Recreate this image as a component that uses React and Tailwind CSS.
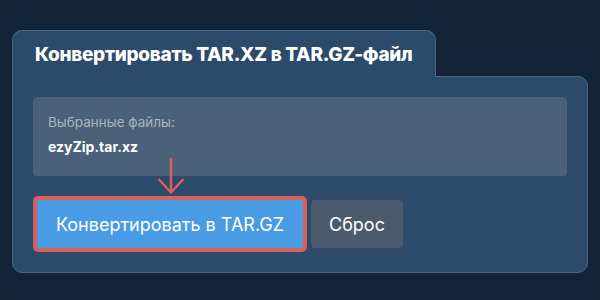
import React from "react";

export default function App() {
  return (
    <div
      className="w-[600px] h-[300px] bg-[#12233a] pt-[30px] px-[12px]"
      style={{ fontFamily: "Inter, 'Noto Sans', sans-serif" }}
    >
      <div className="relative z-10 -mb-px w-[424px] h-[47px] bg-[#2c4a6a] border border-b-0 border-[#506784] rounded-t-[10px] pl-[22px] pt-[10px]">
        <h1 className="text-[19px] leading-[28px] font-extrabold text-white tracking-[-0.3px]">
          Конвертировать TAR.XZ в TAR.GZ-файл
        </h1>
      </div>
      <div className="relative w-[576px] h-[197px] bg-[#2c4a6a] border border-[#506784] rounded-b-[10px] rounded-tr-[10px] p-5">
        <div className="h-[79px] bg-[#4b6079] rounded-[4px] pl-[15px] pt-[16px]">
          <div className="text-[13.5px] leading-[18px] text-[#aab4c1]">Выбранные файлы:</div>
          <div className="mt-[6px] text-[14px] leading-[20px] font-bold text-white">ezyZip.tar.xz</div>
        </div>
        <svg
          className="absolute left-[144px] top-[81px]"
          width="28"
          height="37"
          viewBox="0 0 28 37"
          fill="none"
        >
          <line x1="14" y1="0" x2="14" y2="35" stroke="#d9605a" strokeWidth="2.5" />
          <polyline points="1.5,21 14,34.5 26.5,21" stroke="#d9605a" strokeWidth="2.5" fill="none" />
        </svg>
        <div className="mt-5 flex items-center gap-1">
          <div className="bg-[#d9605a] p-1 rounded-[5px]">
            <button className="h-[48px] w-[266px] bg-[#4a9be5] rounded-[2px] text-[18px] text-white">
              Конвертировать в TAR.GZ
            </button>
          </div>
          <button className="h-[48px] w-[92px] bg-[#4b5b6c] rounded-[4px] text-[18px] text-white">
            Сброс
          </button>
        </div>
      </div>
    </div>
  );
}
